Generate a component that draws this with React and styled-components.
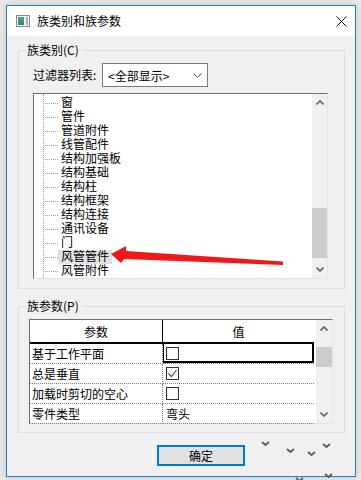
import React from 'react';
import styled, { createGlobalStyle } from 'styled-components';

const GlobalStyle = createGlobalStyle`
  html, body { margin: 0; padding: 0; }
  body {
    background: #e8e8e8;
    font-family: "Noto Sans CJK SC", "Noto Sans", sans-serif;
    font-size: 12px;
    color: #000;
  }
  #root { width: 361px; height: 480px; overflow: hidden; }
`;

const Page = styled.div`
  position: relative;
  width: 361px;
  height: 480px;
  padding: 5px 0 0 6px;
  box-sizing: border-box;
`;

const Window = styled.div`
  width: 350px;
  height: 472px;
  box-sizing: border-box;
  border: 1px solid #1883d7;
  display: flex;
  flex-direction: column;
  background: #f0f0f0;
  box-shadow: 0 0 6px rgba(0, 0, 0, 0.16);
`;

const TitleBar = styled.div`
  height: 30px;
  flex-shrink: 0;
  background: #fff;
  display: flex;
  align-items: center;
  padding-left: 9px;
`;

const TitleText = styled.span`
  margin-left: 7px;
  font-size: 12px;
  line-height: 16px;
`;

const CloseBox = styled.div`
  margin-left: auto;
  width: 28px;
  height: 30px;
  display: flex;
  align-items: center;
  justify-content: center;
`;

const Client = styled.div`
  flex: 1;
  padding: 6px 10px 0 11px;
  display: flex;
  flex-direction: column;
`;

const GroupBox = styled.fieldset`
  margin: 0;
  padding: 0;
  min-width: 0;
  border: 1px solid #dcdcdc;
  & + & { margin-top: 9px; }
`;

const Legend = styled.legend`
  margin-left: 6px;
  padding: 0 2px;
  font-size: 12px;
  line-height: 16px;
`;

const GroupBody = styled.div`
  padding: ${p => p.$pad};
`;

const FilterRow = styled.div`
  display: flex;
  align-items: center;
  height: 24px;
`;

const FilterLabel = styled.span`
  width: 69px;
  line-height: 16px;
`;

const Select = styled.div`
  width: 106px;
  height: 24px;
  box-sizing: border-box;
  border: 1px solid #7a7a7a;
  background: #fff;
  display: flex;
  align-items: center;
  padding: 0 5px 0 5px;
  justify-content: space-between;
`;

const SunkenBox = styled.div`
  display: flex;
  box-sizing: border-box;
  height: ${p => p.$h}px;
  margin-top: ${p => p.$mt}px;
  border: 1px solid;
  border-color: #6e6e6e #e3e3e3 #e3e3e3 #6e6e6e;
  background: #fff;
`;

const TreeList = styled.div`
  flex: 1;
  position: relative;
  overflow: hidden;
  padding-top: 2px;
  &::before {
    content: "";
    position: absolute;
    left: 9px;
    top: 0;
    bottom: 0;
    border-left: 1px dotted #9a9a9a;
  }
`;

const TreeItem = styled.div`
  height: 14px;
  display: flex;
  align-items: center;
  padding-left: 9px;
`;

const Connector = styled.span`
  width: 15px;
  height: 0;
  border-top: 1px dotted #9a9a9a;
`;

const TreeLabel = styled.div`
  height: 14px;
  padding: 0 3px;
  font-family: "Liberation Sans", "Noto Sans CJK SC", sans-serif;
  font-size: 12px;
  line-height: 14px;
  white-space: nowrap;
  background: ${p => (p.$selected ? '#e1e1e1' : 'transparent')};
`;

const ScrollBar = styled.div`
  width: ${p => p.$w}px;
  flex-shrink: 0;
  background: #f0f0f0;
  display: flex;
  flex-direction: column;
`;

const ScrollButton = styled.div`
  height: 17px;
  flex-shrink: 0;
  display: flex;
  align-items: center;
  justify-content: center;
`;

const ScrollTrack = styled.div`
  flex: 1;
`;

const ScrollThumb = styled.div`
  background: #cdcdcd;
  margin-top: ${p => p.$offset}px;
  height: ${p => p.$size}px;
`;

const TableArea = styled.div`
  display: grid;
  grid-template-columns: 133px 151px;
  grid-template-rows: 24px repeat(4, 20px);
  align-content: start;
`;

const TableGap = styled.div`
  width: 2px;
  background: #fff;
`;

const HeaderCell = styled.div`
  box-sizing: border-box;
  border-bottom: 2px solid #000;
  border-right: ${p => (p.$first ? '1px solid #000' : 'none')};
  display: flex;
  align-items: center;
  justify-content: center;
  background: #fff;
`;

const Cell = styled.div`
  box-sizing: border-box;
  border-bottom: 1px dotted #808080;
  border-right: ${p => (p.$first ? '1px dotted #808080' : 'none')};
  display: flex;
  align-items: center;
  padding-left: ${p => (p.$first ? 2 : 3)}px;
  white-space: nowrap;
  box-shadow: ${p => (p.$active ? 'inset -2px -2px 0 #000, inset 1px 0 0 #000' : 'none')};
`;

const CheckBox = styled.span`
  width: 13px;
  height: 13px;
  box-sizing: border-box;
  border: 1px solid #333;
  background: #fff;
  display: flex;
  align-items: center;
  justify-content: center;
`;

const ButtonRow = styled.div`
  display: flex;
  margin-top: 12px;
  padding-left: 139px;
`;

const Button = styled.button`
  width: 88px;
  height: 21px;
  box-sizing: border-box;
  border: 2px solid #0078d7;
  background: #e1e1e1;
  font-family: inherit;
  font-size: 12px;
  color: #000;
  padding: 0;
  line-height: 16px;
`;

const Overlay = styled.svg`
  position: absolute;
  left: 0;
  top: 0;
  pointer-events: none;
`;

const Chevron = ({ up }) => (
  <svg width="8" height="5" viewBox="0 0 8 5">
    <polyline
      points={up ? '0.5,4.5 4,1 7.5,4.5' : '0.5,0.5 4,4 7.5,0.5'}
      fill="none"
      stroke="#606060"
      strokeWidth="1.6"
    />
  </svg>
);

const categories = [
  '窗', '管件', '管道附件', '线管配件', '结构加强板', '结构基础', '结构柱',
  '结构框架', '结构连接', '通讯设备', '门', '风管管件', '风管附件',
];

const AppIcon = () => (
  <svg width="14" height="12" viewBox="0 0 14 12">
    <defs>
      <linearGradient id="ig" x1="0" y1="0" x2="0" y2="1">
        <stop offset="0" stopColor="#4f9aa0" />
        <stop offset="1" stopColor="#3c8a5a" />
      </linearGradient>
    </defs>
    <rect x="0.5" y="0.5" width="13" height="11" fill="#f4f4f4" stroke="#8a8a8a" />
    <rect x="2" y="2" width="6" height="8" fill="url(#ig)" />
    <rect x="10" y="2" width="2" height="8" fill="#b0b0b0" />
  </svg>
);

const Check = ({ checked }) => (
  <CheckBox>
    {checked && (
      <svg width="11" height="11" viewBox="0 0 11 11">
        <polyline points="1.5,5.5 4.5,8.5 9.5,2" fill="none" stroke="#555" strokeWidth="1.2" />
      </svg>
    )}
  </CheckBox>
);

export default function App() {
  return (
    <>
      <GlobalStyle />
      <Page>
        <Window>
          <TitleBar>
            <AppIcon />
            <TitleText>族类别和族参数</TitleText>
            <CloseBox>
              <svg width="11" height="11" viewBox="0 0 11 11">
                <path d="M0.5 0.5 L10.5 10.5 M10.5 0.5 L0.5 10.5" stroke="#111" strokeWidth="1" />
              </svg>
            </CloseBox>
          </TitleBar>
          <Client>
            <GroupBox>
              <Legend>族类别(C)</Legend>
              <GroupBody $pad="5px 16px 9px 14px">
                <FilterRow>
                  <FilterLabel>过滤器列表:</FilterLabel>
                  <Select>
                    <span>&lt;全部显示&gt;</span>
                    <svg width="9" height="5" viewBox="0 0 9 5">
                      <polyline points="0.5,0.5 4.5,4.5 8.5,0.5" fill="none" stroke="#555" strokeWidth="1" />
                    </svg>
                  </Select>
                </FilterRow>
                <SunkenBox $h={186} $mt={6}>
                  <TreeList>
                    {categories.map(c => (
                      <TreeItem key={c}>
                        <Connector />
                        <TreeLabel $selected={c === '风管管件'}>{c}</TreeLabel>
                      </TreeItem>
                    ))}
                  </TreeList>
                  <ScrollBar $w={15}>
                    <ScrollButton><Chevron up /></ScrollButton>
                    <ScrollTrack>
                      <ScrollThumb $offset={97} $size={50} />
                    </ScrollTrack>
                    <ScrollButton><Chevron /></ScrollButton>
                  </ScrollBar>
                </SunkenBox>
              </GroupBody>
            </GroupBox>
            <GroupBox>
              <Legend>族参数(P)</Legend>
              <GroupBody $pad="5px 11px 8px 10px">
                <SunkenBox $h={105} $mt={0}>
                  <TableArea>
                    <HeaderCell $first>参数</HeaderCell>
                    <HeaderCell>值</HeaderCell>
                    <Cell $first>基于工作平面</Cell>
                    <Cell $active><Check /></Cell>
                    <Cell $first>总是垂直</Cell>
                    <Cell><Check checked /></Cell>
                    <Cell $first>加载时剪切的空心</Cell>
                    <Cell><Check /></Cell>
                    <Cell $first>零件类型</Cell>
                    <Cell>弯头</Cell>
                  </TableArea>
                  <TableGap />
                  <ScrollBar $w={16}>
                    <ScrollButton><Chevron up /></ScrollButton>
                    <ScrollTrack>
                      <ScrollThumb $offset={10} $size={20} />
                    </ScrollTrack>
                    <ScrollButton><Chevron /></ScrollButton>
                  </ScrollBar>
                </SunkenBox>
              </GroupBody>
            </GroupBox>
            <ButtonRow>
              <Button>确定</Button>
            </ButtonRow>
          </Client>
        </Window>
        <Overlay width="361" height="480" viewBox="0 0 361 480">
          <polygon
            points="111,254 126,246 126,251 283,261.5 283,265 124,259 121,263"
            fill="#f01818"
          />
          <g fill="none" stroke="#5a5a5a" strokeWidth="1.8">
            <polyline points="262,442 265.5,445 269,442" />
            <polyline points="287,449 290.5,452 294,449" />
            <polyline points="308,452 311.5,455 315,452" />
            <polyline points="323,444 326.5,447 330,444" />
            <polyline points="325,474 328.5,477 332,474" />
            <polyline points="296,478 299.5,481 303,478" />
          </g>
        </Overlay>
      </Page>
    </>
  );
}
